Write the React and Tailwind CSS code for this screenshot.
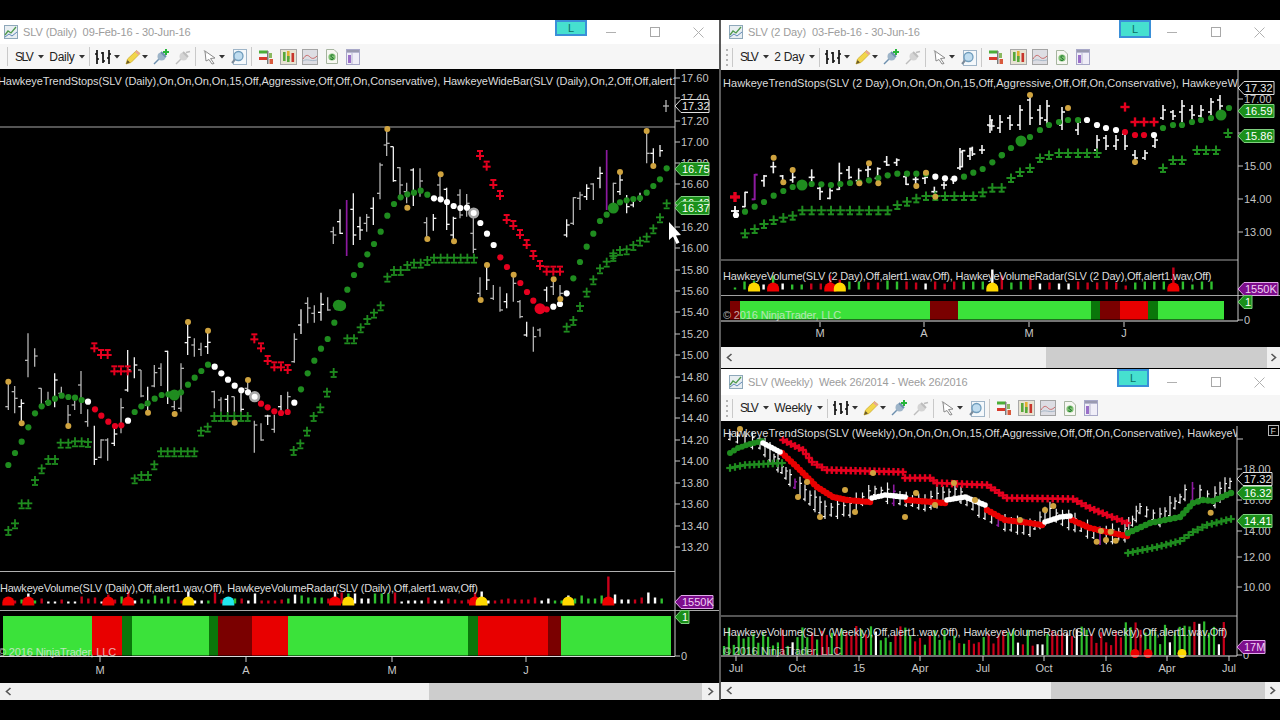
import React from "react";

const GREEN = "#1f8c1f", RED = "#e6001f", GOLD = "#cfa33f", PURPLE = "#8d1aa0";

const z11 = (x, y) => [x / 3, 280 + y / 3];
const z12 = (x, y) => [320 + x / 3, 120 + y / 3];
const z8 = (x, y) => [560 + x / 3, 130 + y / 3];
const z9 = (x, y) => [720 + x / 3, 70 + y / 3];
const z7 = (x, y) => [1040 + x / 3, 420 + y / 3];

const mapPts = (f, a) => a.map(([x, y]) => f(x, y));
const mapBars = (f, a) =>
  a.map(([x, t, b, o, c, col]) => {
    const [rx, rt] = f(x, t);
    const [, rb] = f(x, b);
    const ro = o > 0 ? f(x, o)[1] : null;
    const rc = c > 0 ? f(x, c)[1] : null;
    return [rx, rt, rb, ro, rc, col];
  });

function along(pts, step) {
  const out = [];
  for (let i = 0; i < pts.length - 1; i++) {
    const [a, b] = [pts[i], pts[i + 1]];
    const d = Math.hypot(b[0] - a[0], b[1] - a[1]);
    const n = Math.max(1, Math.round(d / step));
    for (let k = 0; k < n; k++) out.push([a[0] + ((b[0] - a[0]) * k) / n, a[1] + ((b[1] - a[1]) * k) / n]);
  }
  out.push(pts[pts.length - 1]);
  return out;
}

const barsL = [
  ...mapBars(z11, [
    [25, 310, 390, 380, 0, "g"], [44, 318, 400, 335, 355, "g"], [64, 358, 425, 380, 370, "w"], [84, 160, 292, 241, 0, "g"],
    [104, 205, 260, 0, 228, "g"], [124, 325, 375, 325, 0, "g"], [144, 335, 378, 365, 0, "g"], [164, 280, 382, 0, 300, "w"],
    [184, 320, 350, 340, 0, "g"], [204, 375, 435, 0, 405, "g"], [224, 362, 390, 375, 0, "g"], [243, 273, 402, 315, 0, "g"],
    [263, 388, 440, 425, 0, "g"], [283, 437, 555, 0, 538, "w"], [303, 478, 535, 532, 480, "g"], [323, 475, 542, 480, 0, "g"],
    [343, 445, 498, 490, 462, "w"], [363, 355, 460, 0, 383, "g"], [383, 210, 335, 330, 270, "w"], [403, 232, 295, 0, 255, "w"],
    [423, 270, 352, 270, 348, "g"], [443, 320, 392, 375, 0, "w"], [463, 255, 322, 318, 278, "g"], [483, 250, 318, 265, 0, "g"],
    [503, 212, 372, 214, 0, "w"], [523, 362, 390, 380, 0, "g"], [543, 250, 395, 385, 265, "g"], [563, 130, 225, 188, 172, "w"],
    [583, 175, 230, 195, 0, "g"], [603, 188, 228, 208, 0, "g"], [623, 155, 222, 200, 187, "w"], [643, 332, 385, 335, 0, "g"],
    [663, 352, 395, 360, 0, "g"], [683, 345, 398, 358, 0, "w"], [703, 350, 395, 350, 0, "g"], [723, 340, 395, 0, 388, "w"],
    [743, 300, 345, 325, 0, "g"], [763, 422, 518, 0, 435, "g"], [783, 430, 482, 0, 480, "g"], [803, 404, 435, 408, 408, "w"],
    [823, 404, 458, 448, 0, "g"], [843, 345, 405, 380, 0, "w"], [863, 335, 400, 0, 350, "g"], [883, 160, 248, 245, 178, "g"],
    [903, 88, 162, 135, 0, "w"], [923, 52, 130, 70, 84, "g"], [943, 76, 128, 100, 0, "g"], [963, 38, 122, 97, 73, "w"], [983, 52, 92, 0, 90, "g"],
  ]),
  ...mapBars(z12, [
    [40, 320, 372, 335, 345, "g"], [60, 268, 342, 305, 340, "w"], [80, 240, 408, 0, 0, "p"], [100, 220, 375, 268, 345, "w"],
    [120, 290, 360, 320, 330, "w"], [140, 282, 335, 310, 292, "g"], [160, 232, 315, 265, 0, "w"], [180, 128, 238, 220, 135, "g"],
    [200, 30, 108, 75, 70, "g"], [220, 80, 185, 80, 182, "w"], [240, 142, 225, 143, 195, "g"], [260, 188, 250, 215, 0, "g"],
    [280, 145, 258, 150, 0, "w"], [300, 145, 230, 0, 183, "g"], [320, 292, 350, 308, 0, "g"], [340, 282, 332, 0, 295, "w"],
    [360, 165, 230, 195, 0, "g"], [380, 203, 330, 208, 313, "w"], [400, 290, 365, 345, 295, "w"], [420, 208, 295, 225, 285, "g"],
    [440, 222, 290, 0, 250, "g"], [460, 280, 400, 340, 388, "g"], [480, 472, 530, 520, 0, "g"], [500, 440, 510, 0, 480, "w"],
    [520, 495, 540, 535, 0, "g"], [540, 500, 575, 0, 570, "g"], [560, 520, 565, 545, 0, "w"], [580, 470, 545, 0, 490, "g"],
    [600, 540, 595, 545, 590, "g"], [620, 605, 650, 645, 0, "w"], [640, 620, 695, 0, 650, "g"], [660, 625, 650, 630, 0, "g"],
    [680, 500, 545, 510, 0, "w"], [700, 480, 525, 500, 0, "g"], [720, 495, 540, 0, 520, "g"], [740, 298, 352, 345, 315, "w"],
    [760, 232, 315, 310, 233, "g"], [780, 215, 270, 235, 225, "g"], [800, 193, 240, 230, 205, "w"], [820, 190, 240, 192, 0, "g"],
    [840, 140, 205, 175, 160, "w"],
  ]),
  ...mapBars(z8, [
    [140, 60, 240, 0, 0, "p"], [160, 158, 222, 0, 160, "g"], [180, 130, 195, 185, 150, "w"], [200, 195, 250, 0, 230, "w"],
    [220, 215, 232, 225, 0, "w"], [240, 188, 215, 205, 0, "w"], [260, 0, 100, 0, 70, "g"], [280, 55, 110, 70, 0, "w"], [300, 45, 80, 0, 62, "w"],
  ]),
  [666, 100, 112, 106, 106, "g"],
];

const trendL = [
  ...mapPts(z11, [[25,555],[45,519],[65,485],[85,442],[105,400],[125,379],[145,368],[165,356],[185,347],[205,351],[225,353],[245,360]]).map((p) => [...p, GREEN]),
  ...mapPts(z11, [[264,365]]).map((p) => [...p, "#fff"]),
  ...mapPts(z11, [[285,388],[304,407],[325,425],[345,438],[364,436]]).map((p) => [...p, RED]),
  ...mapPts(z11, [[384,422]]).map((p) => [...p, "#fff"]),
  ...mapPts(z11, [[404,396],[424,379],[443,370],[464,356],[485,345],[505,343],[543,337],[564,314],[584,293],[604,273],[624,254]]).map((p) => [...p, GREEN]),
  ...mapPts(z11, [[644,260],[664,280],[684,299],[704,317],[724,331],[744,337]]).map((p) => [...p, "#fff"]),
  ...mapPts(z11, [[783,371],[803,382],[823,394],[843,399],[863,396]]).map((p) => [...p, RED]),
  ...mapPts(z11, [[883,368]]).map((p) => [...p, "#fff"]),
  ...mapPts(z11, [[903,328],[923,280],[943,242],[963,206],[983,177],[1003,128]]).map((p) => [...p, GREEN]),
  ...mapPts(z12, [[82,509],[102,465],[122,435],[142,403],[162,372],[182,335],[202,287],[222,252],[242,232],[262,223],[282,218],[302,212],[322,224]]).map((p) => [...p, GREEN]),
  ...mapPts(z12, [[342,235],[362,238],[381,246],[401,258],[421,264],[441,263],[481,309],[501,341],[521,375]]).map((p) => [...p, "#fff"]),
  ...mapPts(z12, [[541,412],[561,441],[601,489],[621,516],[640,542],[680,568]]).map((p) => [...p, RED]),
  ...mapPts(z12, [[700,560],[720,552],[740,520]]).map((p) => [...p, "#fff"]),
  ...mapPts(z12, [[760,475],[780,426],[800,380],[820,341],[840,303],[860,284]]).map((p) => [...p, GREEN]),
  ...mapPts(z8, [[180,217],[200,211],[220,207],[240,204],[260,188],[280,168],[300,148],[320,115]]).map((p) => [...p, GREEN]),
];
const bigL = [
  [...z11(523, 345), GREEN], [...z11(1015, 76), GREEN], [...z12(62, 557), GREEN], [...z12(660, 566), RED], [...z8(160, 234), GREEN],
];
const ringL = [z11(764, 350), z12(461, 279)];
const crossGL = [
  ...mapPts(z11, [[25,750],[45,730],[65,670],[85,670],[105,600],[125,565],[145,537],[165,537],[182,488],[205,488],[225,484],[245,484],[264,486],[404,595],[424,585],[444,585],[463,553],[483,514],[503,514],[523,514],[543,514],[563,514],[583,514],[603,452],[623,440],[643,408],[663,408],[683,408],[703,408],[723,408],[743,408],[881,510],[901,490],[921,452],[941,408],[961,382],[981,335],[1001,276]]),
  ...mapPts(z12, [[82,655],[102,655],[122,622],[142,597],[162,578],[182,556],[202,470],[222,450],[242,450],[262,435],[282,428],[302,428],[322,420],[342,413],[362,413],[382,413],[402,413],[422,413],[442,413],[462,413],[740,620],[760,600],[780,558],[800,515],[820,478],[840,445],[860,425],[880,400]]),
  ...mapPts(z8, [[160,378],[180,360],[200,358],[220,345],[240,332],[260,320],[280,295],[300,262],[320,220]]),
];
const crossRL = [
  ...mapPts(z11, [[283,205],[303,225],[323,225],[343,274],[363,274],[383,274],[763,178],[783,205],[803,243],[823,262],[843,262],[863,270]]),
  ...mapPts(z12, [[480,108],[500,140],[520,195],[540,228],[560,300],[580,318],[600,345],[620,375],[640,408],[660,438],[680,455],[700,455],[720,455]]),
];
const goldL = [
  ...mapPts(z11, [[25,305],[65,430],[205,438],[444,398],[524,402],[564,126],[624,152],[704,428],[744,300]]),
  ...mapPts(z12, [[202,27],[262,263],[322,357],[362,163],[402,364],[482,540],[501,435],[581,464],[701,478],[721,537]]),
  ...mapPts(z8, [[180,126],[260,3],[280,108]]),
];

const volL = "w5*r r3 g4 w10*r g3 r5 w2 w2 r4 w2 w2 r7 r5 r6 w2 r9*r r4 g7 r12*r w3 g5 g4 g8 g5 g7 r4 r3 w12*y w3 w3 g3 r11 r4 w4*c g5 r5 w3 w10 r3 r3 r3 r4 g5 w9 g8 g6 g6 g6 r5 w12*r r11 g10*y w10 w5 w5 g10 g10 g10 r11 w2 w3 w3 w3 r6 w3 w3 r5 r4 r3 r4 r11*r w12*y w3 r3 r4 r5 r4 r4 r4 r6 w3 w5 g3 g3 w8*y g5 g8 g5 g5 g8 r27*r w9 w4 w4 r4 r6 w11 w6 g5";
const volR = "g2 g8 g9*y w5 g14*r w6 g5 g5 r6 r6 r14*r r10*y g8 g8 r7 r7 g9 g8 r8 r7 w6 r8 r6 r8 g8 g8 g8 w20*y r14 g7 g8 r11 w6 r7 w6 w6 r8 r7 r7 r8 r7 r4 g7 g8 g8 g8 r22*r g8 g5 g8 g8";

const volW = [];
for (let i = 0; i < 103; i++) {
  const s = Math.abs(Math.sin(i * 12.9898) * 43758.5453) % 1;
  const t = Math.abs(Math.sin(i * 78.233) * 12345.678) % 1;
  let c;
  if (i < 12) c = t < 0.75 ? "g" : "w";
  else if (i < 55) c = t < 0.6 ? "r" : t < 0.92 ? "g" : "w";
  else if (i < 81) c = t < 0.65 ? "r" : t < 0.92 ? "g" : "w";
  else c = t < 0.16 ? "r" : t < 0.22 ? "w" : "g";
  volW.push([724 + 4.9 * i, 654, 8 + s * (i > 81 ? 26 : 20), c]);
}

const barsR = [
  ...mapBars(z9, [
    [75,365,412,410,367,"w"],[104,312,390,388,314,"p"],[132,315,350,332,318,"w"],[160,275,310,290,290,"w"],[188,315,345,318,335,"w"],
    [218,305,338,330,322,"w"],[275,298,345,322,322,"w"],[300,350,390,355,365,"w"],[330,355,388,385,362,"w"],[358,278,360,358,310,"w"],
    [387,288,328,300,322,"w"],[416,295,340,332,302,"w"],[444,285,322,300,298,"w"],[473,292,335,325,296,"w"],[500,258,288,275,285,"w"],
    [530,265,288,278,270,"w"],[558,318,345,320,343,"w"],[587,320,355,328,328,"w"],[615,320,342,325,322,"w"],[643,350,370,365,365,"w"],
    [672,335,358,345,345,"w"],[700,322,342,328,328,"w"],[727,240,292,290,242,"w"],[757,230,258,235,252,"w"],[786,225,252,240,240,"w"],[815,150,182,168,168,"w"],
  ]),
  [990,115,133,125,120,"w"],[1000,115,133,128,122,"w"],[1010,115,130,118,125,"w"],[1020,105,130,125,110,"w"],[1030,93,125,100,118,"w"],
  [1040,105,125,110,118,"w"],[1047,100,125,120,106,"w"],[1062,107,130,125,112,"w"],[1078,118,135,130,122,"w"],[1097,135,155,150,140,"w"],
  [1106,135,150,138,146,"w"],[1116,135,150,146,140,"w"],[1125,130,150,134,146,"w"],[1135,150,165,155,158,"w"],[1145,150,160,158,153,"w"],
  [1155,138,148,146,140,"w"],[1163,105,120,118,110,"w"],[1173,110,120,112,116,"w"],[1182,100,122,112,106,"w"],[1192,105,120,110,115,"w"],
  [1201,105,118,116,110,"w"],[1211,98,115,112,102,"w"],[1220,95,110,100,106,"w"],[970,148,160,156,150,"w"],[960,148,170,168,152,"w"],
];
const trendR = [
  ...mapPts(z9, [[75,425],[104,410],[132,396],[161,377],[190,363],[218,351],[275,342],[304,343],[333,345],[361,342],[390,339],[418,337],[447,331],[475,324],[503,316],[532,311],[561,311],[589,311],[618,311]]).map((p) => [...p, GREEN]),
  ...mapPts(z9, [[646,320],[675,325],[703,326]]).map((p) => [...p, "#fff"]),
  ...mapPts(z9, [[732,320],[760,308],[788,297],[817,277],[845,256]]).map((p) => [...p, GREEN]),
  ...[[1002,155],[1011,148],[1030,137],[1040,130],[1049,125],[1059,122],[1068,120],[1078,120]].map((p) => [...p, GREEN]),
  ...[[1087,120],[1097,125],[1106,128],[1116,130]].map((p) => [...p, "#fff"]),
  ...[[1125,132],[1135,135],[1144,135]].map((p) => [...p, RED]),
  ...[[1154,135]].map((p) => [...p, "#fff"]),
  ...[[1163,128],[1173,125],[1182,125],[1192,122],[1201,120],[1211,118],[1229,108]].map((p) => [...p, GREEN]),
];
const crossGR = [
  ...mapPts(z9, [[75,490],[104,477],[132,462],[161,450],[190,443],[218,437],[247,421],[275,421],[304,421],[333,421],[361,421],[390,421],[418,421],[447,421],[475,421],[503,421],[532,405],[561,395],[589,385],[618,378],[646,378],[675,378],[703,378],[732,378],[760,378],[788,367],[817,353],[845,353]]),
  [1011,178],[1020,172],[1030,168],[1040,158],[1049,155],[1059,153],[1068,153],[1078,153],[1087,153],[1097,153],[1163,168],[1173,160],[1182,160],[1197,150],[1206,150],[1216,150],[1228,133],
];
const goldR = [
  ...mapPts(z9, [[161,263],[190,337],[218,300],[418,340],[447,280],[475,340],[589,348],[618,308],[646,380]]),
  [1030,95],[1068,108],[1135,162],
];

const barPath = [[730,437],[760,445],[770,455],[790,480],[810,500],[825,512],[850,510],[875,492],[900,500],[925,505],[955,493],[985,515],[1005,525],[1030,530],[1050,515],[1075,525],[1100,538],[1125,535],[1140,510],[1160,520],[1185,495],[1200,495],[1215,500],[1230,485]];
const barsW = along(barPath, 7).map(([x, y], i) => {
  const s = Math.abs(Math.sin(i * 7.13) * 1000) % 1;
  const h = 6 + s * 8;
  return [x, y - h, y + h * 0.6, y + h * 0.4, y - h * 0.5, i % 17 === 12 ? "p" : "w"];
});
const greenW1 = along([[730,453],[738,448],[750,444],[762,441]], 4.9);
const whiteW = [[[763,443],[780,452]], [[872,498],[885,495],[905,497]], [[947,500],[965,497],[985,505]], [[1045,522],[1060,517],[1070,516]]];
const redW = [[[782,453],[797,467],[817,487],[833,497],[847,500],[870,502]], [[907,500],[945,503]], [[987,510],[1005,520],[1030,523],[1042,525]], [[1072,520],[1090,528],[1107,532],[1127,536]]];
const greenW2 = along([[1128,533],[1150,523],[1180,517],[1193,503],[1203,500],[1213,501],[1231,493]], 4.9);
const crossRW = along([[783,440],[803,450],[812,462],[827,470],[903,472],[905,478],[930,478],[937,483],[987,485],[1007,498],[1073,499],[1090,508],[1107,515],[1127,523]], 4.9);
const crossGW = [...along([[730,468],[745,465],[782,463]], 4.9), ...along([[1128,553],[1157,547],[1180,541],[1193,532],[1207,525],[1231,519]], 4.9)];
const goldW = [[740,429],[798,497],[807,482],[845,490],[873,473],[916,493],[954,483],[820,517],[855,512],[905,517],[935,505],[975,500],[1020,520],[1045,510],
  ...mapPts(z7, [[40,258],[170,365],[198,360],[227,362],[183,333],[212,335],[512,278]])];

const barColor = { w: "#f4f4f4", g: "#b4b4b4", p: PURPLE };
const volColor = { w: "#ffffff", g: "#2fc02f", r: "#c8001a" };
const blobColor = { r: "#f00000", y: "#ffd800", c: "#22e6ee" };

function Bars({ data, tick = 3, sw = 1.3 }) {
  return data.map(([x, t, b, o, c, col], i) => (
    <g key={i} stroke={barColor[col]} strokeWidth={col === "p" ? sw + 0.4 : sw}>
      <line x1={x} x2={x} y1={t} y2={b} />
      {o != null && <line x1={x - tick} x2={x} y1={o} y2={o} />}
      {c != null && <line x1={x} x2={x + tick} y1={c} y2={c} />}
    </g>
  ));
}
function Dots({ data, color, r = 3.1 }) {
  return data.map(([x, y, c], i) => <circle key={i} cx={x} cy={y} r={r} fill={c || color} />);
}
function Crosses({ data, color, dash = 0, s = 4, sw = 1.8 }) {
  return data.map(([x, y], i) => (
    <g key={i} stroke={color} strokeWidth={sw}>
      <line x1={x - s} x2={x + s} y1={y} y2={y} />
      <line x1={x} x2={x} y1={y - s} y2={y + s} />
      {dash !== 0 && <line x1={x - 3} x2={x + 3} y1={y + dash} y2={y + dash} />}
    </g>
  ));
}
function Volume({ code, x0, step, base }) {
  return code.split(" ").map((tok, i) => {
    const [b, blob] = tok.split("*");
    const x = x0 + step * i;
    const h = +b.slice(1);
    return (
      <g key={i}>
        <rect x={x - 1.2} y={base - h} width="2.4" height={h} fill={volColor[b[0]]} />
        {blob && <path d={`M${x - 6} ${base + 2} L${x - 6} ${base - 1} A6 6 0 0 1 ${x + 6} ${base - 1} L${x + 6} ${base + 2} Z`} fill={blobColor[blob]} />}
      </g>
    );
  });
}
function Segs({ y, h, segs }) {
  const c = { G: "#3be23a", R: "#e80000", g: "#0a760a", r: "#7a0000" };
  return segs.map(([a, b, k], i) => <rect key={i} x={a} y={y} width={b - a} height={h} fill={c[k]} />);
}
function Ticks({ x, ticks }) {
  return ticks.map(([l, y]) => (
    <g key={l + y}>
      <line x1={x} x2={x + 5} y1={y} y2={y} stroke="#c4c4c4" />
      <text x={x + 6} y={y + 4} fontSize="11" fill="#c4c4c4">{l}</text>
    </g>
  ));
}
function Tag({ x, y, w = 34, label, kind = "green" }) {
  const k = {
    green: ["#1a8f1a", "#7fd07f", "#ffffff"],
    outline: ["#000", "#e0e0e0", "#e8e8e8"],
    purple: ["#7d0d8c", "#e0a8e8", "#f0d0f4"],
  }[kind];
  return (
    <g>
      <path d={`M${x} ${y} L${x + 6} ${y - 6.5} L${x + w} ${y - 6.5} L${x + w} ${y + 6.5} L${x + 6} ${y + 6.5} Z`} fill={k[0]} stroke={k[1]} />
      <text x={x + 7} y={y + 4} fontSize="11" fill={k[2]}>{label}</text>
    </g>
  );
}
function TimeLabels({ y, items, tickY }) {
  return items.map(([l, x]) => (
    <g key={l + x}>
      <line x1={x} x2={x} y1={tickY} y2={tickY + 5} stroke="#d0d0d0" />
      <text x={x} y={y} fontSize="11" fill="#c8c8c8" textAnchor="middle">{l}</text>
    </g>
  ));
}
function Legend({ x, y, w, children, color = "#dcdcdc", op = 1, cls = "" }) {
  return (
    <svg x={x} y={y - 11} width={w} height="16" overflow="hidden">
      <text x="0" y="11" fontSize="11" fill={color} opacity={op} className={cls}>{children}</text>
    </svg>
  );
}

function ChartLeft() {
  return (
    <svg viewBox="0 69 719 614" width="719" height="614" className="block">
      <line x1="0" x2="675" y1="127" y2="127" stroke="#a8a8a8" strokeWidth="1.2" />
      <Bars data={barsL} />
      <Crosses data={crossGL} color={GREEN} dash={5} />
      <Crosses data={crossRL} color={RED} dash={-5} sw={2} />
      <Dots data={trendL} />
      <Dots data={bigL} r={5.5} />
      {ringL.map(([x, y], i) => (
        <g key={i}>
          <circle cx={x} cy={y} r="5.6" fill="#a8a8a8" />
          <circle cx={x} cy={y} r="3" fill="#fff" />
        </g>
      ))}
      <Dots data={goldL} color={GOLD} r={3} />
      <Legend x={-2} y={85} w={677} cls="tracking-[-0.07px]">HawkeyeTrendStops(SLV (Daily),On,On,On,On,15,Off,Aggressive,Off,Off,On,Conservative), HawkeyeWideBar(SLV (Daily),On,2,Off,Off,alert1.wav,Off)</Legend>
      <line x1="0" x2="675" y1="571.5" y2="571.5" stroke="#b0b0b0" />
      <line x1="0" x2="719" y1="610.5" y2="610.5" stroke="#a8a8a8" />
      <Volume code={volL} x0={8.33} step={6.667} base={603.5} />
      <Legend x={0} y={592} w={675} cls="tracking-[-0.22px]">HawkeyeVolume(SLV (Daily),Off,alert1.wav,Off), HawkeyeVolumeRadar(SLV (Daily),Off,alert1.wav,Off)</Legend>
      <Segs y={616} h={39.5} segs={[[3,92,"G"],[92,122,"R"],[122,132,"g"],[132,209,"G"],[209,218,"g"],[218,252,"r"],[252,288,"R"],[288,468,"G"],[468,478,"g"],[478,548,"R"],[548,561,"r"],[561,671,"G"]]} />
      <Legend x={-2} y={656} w={300} color="#e8e8e8" op={0.75} cls="tracking-[-0.15px]">© 2016 NinjaTrader, LLC</Legend>
      <line x1="675" x2="675" y1="69" y2="656" stroke="#c8c8c8" />
      <line x1="0" x2="675" y1="656.5" y2="656.5" stroke="#dadada" />
      <Ticks x={675} ticks={[["17.60",78],["17.40",98],["17.20",121],["17.00",142],["16.80",163],["16.60",184],["16.40",205],["16.20",227],["16.00",248],["15.80",270],["15.60",291],["15.40",312],["15.20",334],["15.00",355],["14.80",377],["14.60",398],["14.40",418],["14.20",440],["14.00",461],["13.80",483],["13.60",504],["13.40",526],["13.20",547],["0",656]]} />
      <Tag x={675} y={106} label="17.32" kind="outline" />
      <Tag x={675} y={169} label="16.75" />
      <Tag x={675} y={203} label="16.43" />
      <Tag x={675} y={208} label="16.37" />
      <Tag x={675} y={602} w={38} label="1550K" kind="purple" />
      <Tag x={675} y={617} w={14} label="1" />
      <TimeLabels y={674} tickY={657} items={[["M",100],["A",246],["M",392],["J",526]]} />
      <path d="M669 222 V240 L673 236.5 L676.5 244 L679.5 242.5 L676 235.5 L681 235 Z" fill="#fff" />
    </svg>
  );
}

function ChartTop() {
  return (
    <svg viewBox="721 70 559 277" width="559" height="277" className="block">
      <Bars data={barsR} sw={1.6} />
      <line x1="735" x2="735" y1="206" y2="218" stroke="#fff" strokeWidth="1.8" />
      <line x1="731" x2="739" y1="211" y2="211" stroke="#fff" strokeWidth="1.8" />
      <Crosses data={crossGR} color={GREEN} dash={4} s={4.6} sw={2} />
      <Crosses data={[[735,197]]} color={RED} s={5} sw={3.4} />
      <Crosses data={[[1125,107],[1135,122],[1144,122],[1154,122]]} color={RED} s={4.6} sw={2.4} />
      <Dots data={trendR} />
      <Dots data={[[736,215,"#fff"]]} />
      <Dots data={[[802,185,GREEN],[1021,141,GREEN],[1221,115,GREEN]]} r={5.5} />
      <Dots data={goldR} color={GOLD} r={3} />
      <Legend x={723} y={87} w={515} cls="tracking-[0.04px]">HawkeyeTrendStops(SLV (2 Day),On,On,On,On,15,Off,Aggressive,Off,Off,On,Conservative), HawkeyeWideBar(SLV (2 Day),On,2,Off</Legend>
      <line x1="721" x2="1238" y1="260" y2="260" stroke="#a0a0a0" />
      <line x1="721" x2="1280" y1="295.5" y2="295.5" stroke="#a0a0a0" />
      <Volume code={volR} x0={735} step={9.53} base={289.5} />
      <Legend x={723} y={280} w={515} cls="tracking-[-0.2px]">HawkeyeVolume(SLV (2 Day),Off,alert1.wav,Off), HawkeyeVolumeRadar(SLV (2 Day),Off,alert1.wav,Off)</Legend>
      <Segs y={301} h={18.5} segs={[[730,740,"r"],[740,930,"G"],[930,958,"r"],[958,1091,"G"],[1091,1100,"g"],[1100,1120,"r"],[1120,1148,"R"],[1148,1158,"g"],[1158,1224,"G"]]} />
      <Legend x={723} y={319} w={300} color="#e8e8e8" op={0.7} cls="tracking-[-0.15px]">© 2016 NinjaTrader, LLC</Legend>
      <line x1="1238" x2="1238" y1="70" y2="321" stroke="#c8c8c8" />
      <line x1="721" x2="1238" y1="321" y2="321" stroke="#e8e8e8" />
      <Ticks x={1238} ticks={[["17.00",99],["16.00",133],["15.00",166],["14.00",199],["13.00",232],["0",320]]} />
      <Tag x={1238} y={88} w={36} label="17.32" kind="outline" />
      <Tag x={1238} y={111} w={36} label="16.59" />
      <Tag x={1238} y={136} w={36} label="15.86" />
      <Tag x={1238} y={289} w={40} label="1550K" kind="purple" />
      <Tag x={1238} y={302} w={14} label="1" />
      <TimeLabels y={337} tickY={322} items={[["M",820],["A",924],["M",1029],["J",1124]]} />
    </svg>
  );
}

function ChartWeek() {
  return (
    <svg viewBox="721 421 559 261" width="559" height="261" className="block">
      <Bars data={barsW} tick={2} sw={1.2} />
      <Crosses data={crossRW} color={RED} s={3.8} sw={2.4} />
      <Crosses data={crossGW} color={GREEN} s={3.8} sw={2.2} />
      <Dots data={greenW1} color={GREEN} r={3} />
      {redW.map((p, i) => <Dots key={i} data={along(p, 4)} color="#e80000" r={3.2} />)}
      {whiteW.map((p, i) => <Dots key={i} data={along(p, 3)} color="#fff" r={2.8} />)}
      <Dots data={greenW2} color={GREEN} r={3.2} />
      <Dots data={goldW} color={GOLD} r={3} />
      <Legend x={723} y={437} w={514} cls="tracking-[0.02px]">HawkeyeTrendStops(SLV (Weekly),On,On,On,On,15,Off,Aggressive,Off,Off,On,Conservative), HawkeyeWideBar(SLV (Weekly),On,2,Off</Legend>
      <line x1="721" x2="1237" y1="616" y2="616" stroke="#a8a8a8" />
      {volW.map(([x, b, h, c], i) => <rect key={i} x={x - 1.1} y={b - h} width="2.2" height={h + 1} fill={volColor[c]} />)}
      {[[1135,"#f00000"],[1148,"#f00000"],[1182,"#ffd800"]].map(([x, c]) => <circle key={x} cx={x} cy={653.5} r="4.5" fill={c} />)}
      <Legend x={723} y={636} w={514} cls="tracking-[-0.18px]">HawkeyeVolume(SLV (Weekly),Off,alert1.wav,Off), HawkeyeVolumeRadar(SLV (Weekly),Off,alert1.wav,Off)</Legend>
      <Legend x={723} y={655} w={300} color="#e8e8e8" op={0.75} cls="tracking-[-0.15px]">© 2016 NinjaTrader, LLC</Legend>
      <line x1="1237" x2="1237" y1="426" y2="656" stroke="#c8c8c8" />
      <line x1="721" x2="1237" y1="656" y2="656" stroke="#e0e0e0" />
      <line x1="1237" x2="1243" y1="439" y2="439" stroke="#c8c8c8" />
      <Ticks x={1237} ticks={[["18.00",469],["16.00",500],["14.00",531],["12.00",557],["10.00",587],["0",655]]} />
      <Tag x={1237} y={479} w={35} label="17.32" kind="outline" />
      <Tag x={1237} y={493} w={35} label="16.32" />
      <Tag x={1237} y={521} w={35} label="14.41" />
      <Tag x={1237} y={647} w={28} label="17M" kind="purple" />
      <rect x="1268.5" y="425.5" width="10" height="10" fill="none" stroke="#b8b8b8" />
      <text x="1270.5" y="434" fontSize="9" fill="#cfcfcf">F</text>
      <TimeLabels y={672} tickY={656} items={[["Jul",736],["Oct",797],["15",859],["Apr",920],["Jul",983],["Oct",1044],["16",1106],["Apr",1167],["Jul",1229]]} />
    </svg>
  );
}

function Caret() {
  return <svg width="6" height="4" viewBox="0 0 6 4" className="shrink-0"><path d="M0 0H6L3 3.5Z" fill="#333" /></svg>;
}
const Sep = ({ cls = "mx-[4px]" }) => <div className={`w-px h-[19px] bg-[#c9c9c9] shrink-0 ${cls}`} />;

function IcBars() {
  return (
    <svg width="18" height="16" viewBox="0 0 18 16">
      <g stroke="#111" strokeWidth="1.7" fill="none">
        <path d="M3 1V15M1 5H3M3 10H5" />
        <path d="M9 3V14M7 4H9M9 12H11" />
        <path d="M15 1V15M13 9H15M15 5H17" />
      </g>
    </svg>
  );
}
function IcPencil() {
  return (
    <svg width="16" height="16" viewBox="0 0 16 16">
      <path d="M1 15L2.5 10L11.5 1.5L15 4.5L6 13.5Z" fill="#f2d64a" stroke="#c9a625" strokeWidth=".7" />
      <path d="M1 15L2.5 11L5 13.5Z" fill="#6b5b2a" />
      <path d="M11.5 1.5L15 4.5L13.5 6L10 3Z" fill="#e8a49a" />
    </svg>
  );
}
function IcPin({ plus, gray }) {
  const a = gray ? "#d4d4d4" : "#9db4c8";
  const b = gray ? "#bdbdbd" : "#6d8fae";
  return (
    <svg width="16" height="16" viewBox="0 0 16 16">
      <path d="M1 15L6 10" stroke={b} strokeWidth="1.5" />
      <circle cx="8.5" cy="7.5" r="4" fill={a} />
      <path d="M8 3L13 8" stroke={b} strokeWidth="2" />
      {plus && <path d="M13 0V6M10 3H16" stroke="#27b53a" strokeWidth="2" />}
      {gray && <path d="M11 3.5L15 2.5" stroke={b} strokeWidth="1.5" />}
    </svg>
  );
}
function IcCursor() {
  return (
    <svg width="14" height="16" viewBox="0 0 14 16">
      <path d="M2 2L12 9L7.5 9.5L11 14.5L9 15L6 10.5L3 12Z" fill="#fff" stroke="#8a8a8a" />
      <path d="M1 1L3 5" stroke="#aaa" />
    </svg>
  );
}
function IcMag() {
  return (
    <svg width="16" height="17" viewBox="0 0 16 17">
      <rect x="2.5" y="1.5" width="13" height="15" fill="#f4f8fb" stroke="#9fb5c8" />
      <circle cx="7.5" cy="8" r="4.5" fill="#bfdcef" stroke="#6f9cbc" strokeWidth="1.3" />
      <path d="M4 11.5L1 15" stroke="#7b8b9a" strokeWidth="2" />
    </svg>
  );
}
function IcFlags() {
  return (
    <svg width="16" height="16" viewBox="0 0 16 16">
      <rect x="1" y="1.5" width="9" height="3" fill="#4cae38" />
      <rect x="1" y="8" width="8" height="3" fill="#d83a2c" />
      <rect x="11" y="4" width="3" height="5" fill="#8ab860" />
      <rect x="11.5" y="10" width="3.5" height="5" fill="#d85a3c" />
      <rect x="9" y="2" width="1.5" height="13" fill="#7a7a7a" />
    </svg>
  );
}
function IcCandles() {
  return (
    <svg width="17" height="16" viewBox="0 0 17 16">
      <rect x=".5" y=".5" width="16" height="15" fill="#e7e3d2" stroke="#a9a9a9" />
      <rect x="3" y="3" width="2.6" height="9" fill="#58a83a" />
      <rect x="7" y="2" width="2.6" height="8" fill="#e0b030" />
      <rect x="7" y="7" width="2.6" height="6" fill="#58a83a" />
      <rect x="11.5" y="4" width="2.6" height="9" fill="#c8352c" />
    </svg>
  );
}
function IcLine() {
  return (
    <svg width="16" height="16" viewBox="0 0 16 16">
      <rect x=".5" y=".5" width="15" height="15" fill="#dddde3" stroke="#a4a4a4" />
      <path d="M1 10C4 5 6 6 8 8S12 10 15 7" stroke="#c96a6a" fill="none" />
      <path d="M1 12C5 9 9 13 15 11" stroke="#a8b8c8" fill="none" />
    </svg>
  );
}
function IcDollar() {
  return (
    <svg width="12" height="15" viewBox="0 0 12 15">
      <path d="M.5.5H8L11.5 4V14.5H.5Z" fill="#f7f7f2" stroke="#a7b5a0" />
      <circle cx="6" cy="8" r="3.6" fill="#7fc073" />
      <path d="M7.5 6.3C6.5 5.5 4.5 5.8 4.8 7.1S7.6 8.4 7.3 9.6 5 10.6 4.3 9.8" stroke="#116e22" fill="none" strokeWidth="1" />
    </svg>
  );
}
function IcTable() {
  return (
    <svg width="14" height="16" viewBox="0 0 14 16">
      <rect x=".5" y=".5" width="13" height="15" fill="#f0eef8" stroke="#a8a8c8" />
      <rect x="1" y="1" width="12" height="2.5" fill="#9a9ab0" />
      <rect x="2" y="6" width="3" height="8" fill="#9a6fc8" />
      <path d="M1 3.5H13M6 4V15" stroke="#b8b8d0" />
    </svg>
  );
}

function Toolbar({ interval, grip, tall }) {
  return (
    <div className={`flex items-center bg-[#f6f6f6] shrink-0 text-[12px] text-[#222] ${tall ? "h-[26px]" : "h-[25px]"} ${grip ? "pl-[2px]" : "pl-[7px]"}`}>
      {grip && (
        <div className="w-[8px] h-[17px] flex flex-col justify-between items-center mr-[1px] shrink-0">
          {[0, 1, 2, 3].map((i) => <div key={i} className="w-[2px] h-[2px] bg-[#b4b4b4]" />)}
        </div>
      )}
      <Sep cls="" />
      <span className="ml-[7px] tracking-[-1.5px]">SLV</span>
      <span className="ml-[6px]"><Caret /></span>
      <span className="ml-[5px] tracking-[-0.3px]">{interval}</span>
      <span className="ml-[5px]"><Caret /></span>
      <Sep />
      <IcBars />
      <span className="ml-[2px]"><Caret /></span>
      <span className="ml-[5px]"><IcPencil /></span>
      <span className="ml-[1px]"><Caret /></span>
      <span className="ml-[5px]"><IcPin plus /></span>
      <span className="ml-[6px]"><IcPin gray /></span>
      <Sep cls="ml-[4px] mr-[7px]" />
      <IcCursor />
      <span className="ml-[2px]"><Caret /></span>
      <span className="ml-[6px]"><IcMag /></span>
      <Sep />
      <span className="ml-[2px]"><IcFlags /></span>
      <span className="ml-[6px]"><IcCandles /></span>
      <span className="ml-[5px]"><IcLine /></span>
      <span className="ml-[8px]"><IcDollar /></span>
      <span className="ml-[8px]"><IcTable /></span>
    </div>
  );
}

function TitleBar({ title, lCls, h, pad }) {
  return (
    <div className={`relative flex items-center bg-white shrink-0 ${h} ${pad}`}>
      <svg width="14" height="14" viewBox="0 0 14 14" className="shrink-0">
        <rect x=".5" y=".5" width="13" height="13" fill="#e8eef2" stroke="#8ea8ba" />
        <path d="M1 10L4 6L7 8L12 2" stroke="#4f9a4f" fill="none" strokeWidth="1.3" />
        <path d="M1 12L5 9L8 11L13 7" stroke="#5f88b8" fill="none" />
      </svg>
      <span className="ml-[5px] text-[11px] tracking-[-0.1px] text-[#9c9c9c] whitespace-pre">{title}</span>
      <div className="ml-auto flex items-center">
        <div className="w-[44px] flex justify-center"><div className="w-[10px] h-px bg-[#b0b0b0]" /></div>
        <div className="w-[44px] flex justify-center"><div className="w-[10px] h-[10px] border border-[#a8a8a8]" /></div>
        <div className="w-[42px] flex justify-center">
          <svg width="11" height="11" viewBox="0 0 11 11"><path d="M.5.5L10.5 10.5M10.5.5L.5 10.5" stroke="#b0b0b0" /></svg>
        </div>
      </div>
      <div className={`absolute top-0 ${lCls} w-[32px] bg-[#46e0cf] border-2 border-[#3a8fd8] flex items-center justify-center text-[11px] text-[#0b6f66] leading-none`}>L</div>
    </div>
  );
}

function ScrollBar({ spacer, thumb, h }) {
  return (
    <div className={`flex items-stretch bg-[#f0f0f0] shrink-0 ${h}`}>
      <div className="w-[16px] shrink-0 flex items-center justify-center">
        <svg width="7" height="9" viewBox="0 0 7 9"><path d="M5.5 1L1.5 4.5L5.5 8" stroke="#555" strokeWidth="1.6" fill="none" /></svg>
      </div>
      <div className={`${spacer} shrink-0`} />
      <div className={`${thumb} shrink-0 bg-[#cdcdcd]`} />
      <div className="flex-1 flex items-center justify-center">
        <svg width="7" height="9" viewBox="0 0 7 9"><path d="M1.5 1L5.5 4.5L1.5 8" stroke="#555" strokeWidth="1.6" fill="none" /></svg>
      </div>
    </div>
  );
}

export default function App() {
  return (
    <div className="w-[1280px] h-[720px] bg-black overflow-hidden py-[20px] flex font-['Liberation_Sans',Arial,sans-serif]">
      <div className="w-[719px] flex flex-col shrink-0">
        <TitleBar title="SLV (Daily)  09-Feb-16 - 30-Jun-16" lCls="left-[555px] h-[16px]" h="h-[24px]" pad="pl-[4px]" />
        <Toolbar interval="Daily" />
        <ChartLeft />
        <ScrollBar spacer="w-[413px]" thumb="w-[273px]" h="h-[17px]" />
      </div>
      <div className="w-[2px] bg-[#5a5a5a] shrink-0" />
      <div className="w-[559px] flex flex-col shrink-0">
        <TitleBar title="SLV (2 Day)  03-Feb-16 - 30-Jun-16" lCls="left-[398px] h-[18px]" h="h-[24px]" pad="pl-[8px]" />
        <Toolbar interval="2 Day" grip tall />
        <ChartTop />
        <ScrollBar spacer="w-[309px]" thumb="w-[221px]" h="h-[21px]" />
        <div className="h-px bg-black shrink-0" />
        <TitleBar title="SLV (Weekly)  Week 26/2014 - Week 26/2016" lCls="left-[396px] h-[18px]" h="h-[26px]" pad="pl-[8px]" />
        <Toolbar interval="Weekly" grip tall />
        <ChartWeek />
        <ScrollBar spacer="w-[314px]" thumb="w-[214px]" h="h-[17px]" />
      </div>
    </div>
  );
}
